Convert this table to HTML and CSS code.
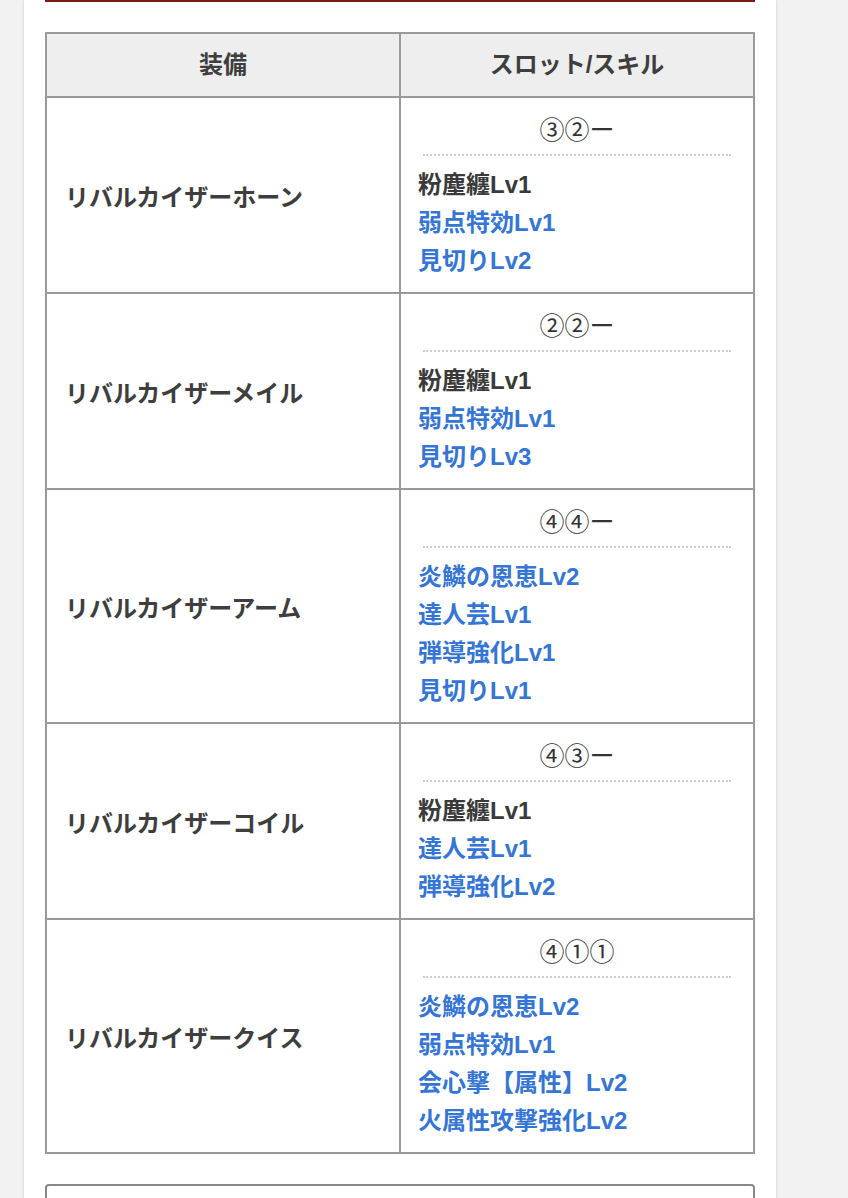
FILE: index.html
```html
<!DOCTYPE html>
<html lang="ja">
<head>
<meta charset="utf-8">
<title>装備</title>
<link rel="stylesheet" href="styles.css">
</head>
<body>
<div class="page">
  <div class="rule"></div>
  <table class="equip">
    <thead>
      <tr><th>装備</th><th>スロット/スキル</th></tr>
    </thead>
    <tbody>
      <tr>
        <td class="name">リバルカイザーホーン</td>
        <td class="skills">
          <div class="slot">③②ー</div>
          <div class="skill plain">粉塵纏Lv1</div>
          <div class="skill">弱点特効Lv1</div>
          <div class="skill">見切りLv2</div>
        </td>
      </tr>
      <tr>
        <td class="name">リバルカイザーメイル</td>
        <td class="skills">
          <div class="slot">②②ー</div>
          <div class="skill plain">粉塵纏Lv1</div>
          <div class="skill">弱点特効Lv1</div>
          <div class="skill">見切りLv3</div>
        </td>
      </tr>
      <tr>
        <td class="name">リバルカイザーアーム</td>
        <td class="skills">
          <div class="slot">④④ー</div>
          <div class="skill">炎鱗の恩恵Lv2</div>
          <div class="skill">達人芸Lv1</div>
          <div class="skill">弾導強化Lv1</div>
          <div class="skill">見切りLv1</div>
        </td>
      </tr>
      <tr>
        <td class="name">リバルカイザーコイル</td>
        <td class="skills">
          <div class="slot">④③ー</div>
          <div class="skill plain">粉塵纏Lv1</div>
          <div class="skill">達人芸Lv1</div>
          <div class="skill">弾導強化Lv2</div>
        </td>
      </tr>
      <tr>
        <td class="name">リバルカイザークイス</td>
        <td class="skills">
          <div class="slot">④①①</div>
          <div class="skill">炎鱗の恩恵Lv2</div>
          <div class="skill">弱点特効Lv1</div>
          <div class="skill">会心撃【属性】Lv2</div>
          <div class="skill">火属性攻撃強化Lv2</div>
        </td>
      </tr>
    </tbody>
  </table>
  <div class="box"></div>
</div>
</body>
</html>
```

FILE: styles.css
```css
html, body {
  margin: 0;
  padding: 0;
  background: #f2f2f2;
}
body {
  font-family: "Liberation Sans", "Noto Sans CJK JP", sans-serif;
  color: #3a3a3a;
}
.page {
  width: 710px;
  margin-left: 24px;
  padding: 0 21px;
  min-height: 1198px;
  background: #fff;
  box-shadow: 0 0 3px rgba(0, 0, 0, 0.18);
}
.rule {
  height: 2px;
  background: #7a1a12;
}
.equip {
  width: 710px;
  margin-top: 30px;
  border-collapse: collapse;
  border: 2px solid #9a9a9a;
  table-layout: fixed;
}
.equip th,
.equip td {
  border: 2px solid #9a9a9a;
}
.equip th {
  background: #eeeeee;
  font-size: 24px;
  font-weight: bold;
  line-height: 30px;
  padding: 16px 0;
  text-align: center;
  color: #3e3e3e;
}
.equip td.name {
  font-size: 24px;
  font-weight: bold;
  padding: 0 0 0 18px;
  vertical-align: middle;
  color: #3e3e3e;
}
.equip td.skills {
  padding: 14px 17px 12px 17px;
  vertical-align: top;
}
.slot {
  text-align: center;
  font-size: 25px;
  line-height: 36px;
  padding-bottom: 6px;
  margin: 0 5px 10px;
  border-bottom: 2px dotted #cccccc;
  color: #333;
}
.skill {
  font-size: 24px;
  font-weight: bold;
  line-height: 38px;
  color: #3575d3;
}
.skill.plain {
  color: #3a3a3a;
}
.box {
  margin-top: 30px;
  height: 40px;
  border: 2px solid #888;
  border-radius: 4px;
}
```
